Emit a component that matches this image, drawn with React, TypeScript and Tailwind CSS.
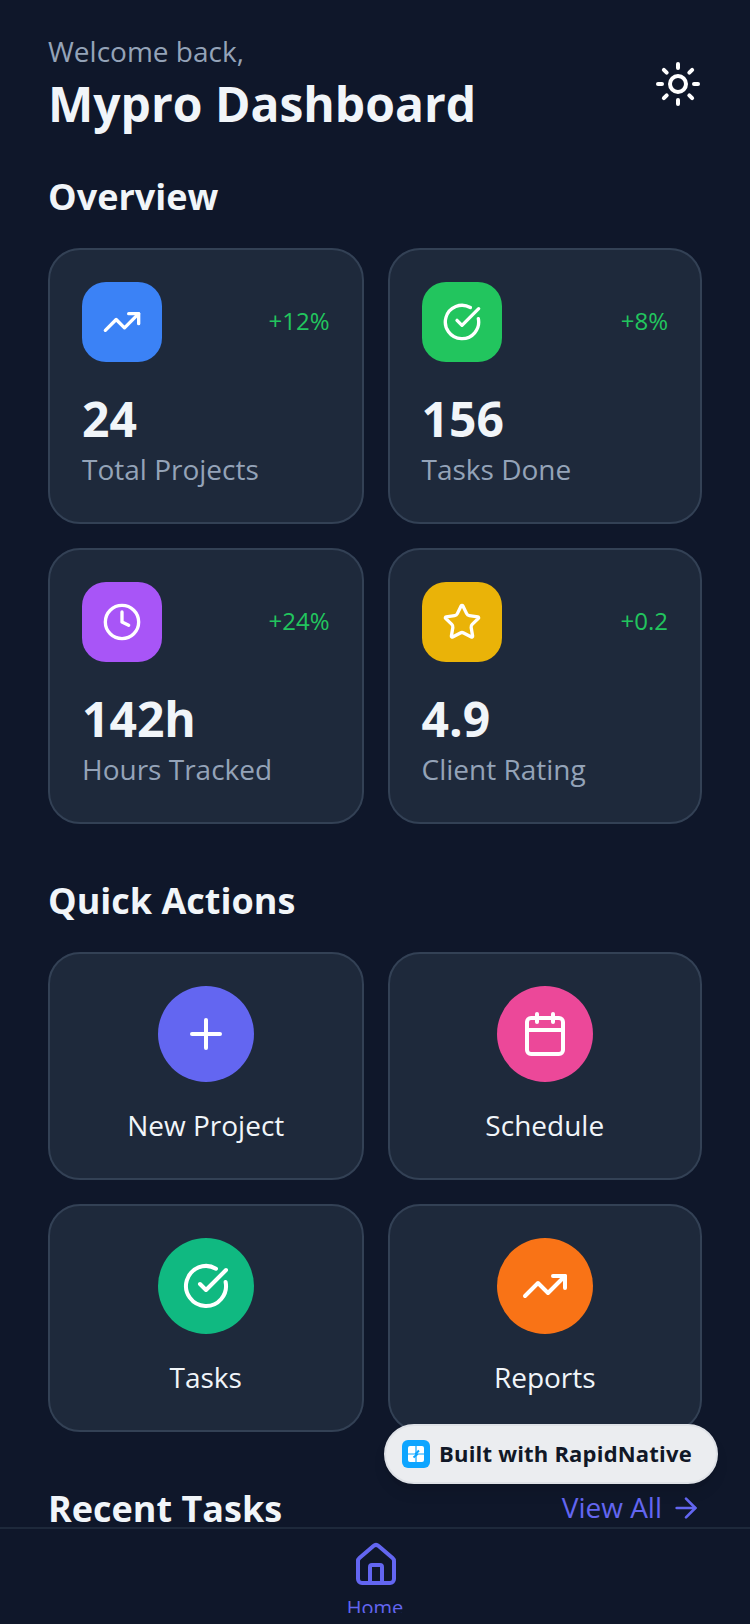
import { ArrowRight, Calendar, CircleCheckBig, Clock, Home, Plus, Star, Sun, TrendingUp } from "lucide-react";
import type { LucideIcon } from "lucide-react";

type Stat = { icon: LucideIcon; tint: string; change: string; value: string; label: string };
type Action = { icon: LucideIcon; tint: string; label: string };

const stats: Stat[] = [
  { icon: TrendingUp, tint: "bg-[#3b82f6]", change: "+12%", value: "24", label: "Total Projects" },
  { icon: CircleCheckBig, tint: "bg-[#22c55e]", change: "+8%", value: "156", label: "Tasks Done" },
  { icon: Clock, tint: "bg-[#a855f7]", change: "+24%", value: "142h", label: "Hours Tracked" },
  { icon: Star, tint: "bg-[#eab308]", change: "+0.2", value: "4.9", label: "Client Rating" },
];

const actions: Action[] = [
  { icon: Plus, tint: "bg-[#6366f1]", label: "New Project" },
  { icon: Calendar, tint: "bg-[#ec4899]", label: "Schedule" },
  { icon: CircleCheckBig, tint: "bg-[#10b981]", label: "Tasks" },
  { icon: TrendingUp, tint: "bg-[#f97316]", label: "Reports" },
];

const StatCard = ({ icon: Icon, tint, change, value, label }: Stat) => (
  <div className="rounded-[32px] border-2 border-[#334155] bg-[#1e293b] p-8">
    <div className="mb-6 flex items-center justify-between">
      <div className={`flex h-20 w-20 items-center justify-center rounded-3xl ${tint}`}>
        <Icon size={40} color="#ffffff" />
      </div>
      <span className="pb-[2px] text-2xl leading-[30px] text-[#22c55e]">{change}</span>
    </div>
    <div className="pt-[2px] text-5xl leading-[62px] font-bold text-[#f1f5f9]">{value}</div>
    <div className="pb-[2px] text-[28px] leading-[38px] text-[#94a3b8]">{label}</div>
  </div>
);

const ActionCard = ({ icon: Icon, tint, label }: Action) => (
  <div className="flex flex-col items-center rounded-[32px] border-2 border-[#334155] bg-[#1e293b] p-8">
    <div className={`mb-6 flex h-24 w-24 items-center justify-center rounded-full ${tint}`}>
      <Icon size={48} color="#ffffff" />
    </div>
    <span className="pb-[2px] text-[28px] leading-[38px] font-medium text-[#f1f5f9]">{label}</span>
  </div>
);

const BuiltWithBadge = () => (
  <div className="absolute top-[1424px] left-[384px] flex h-[60px] w-[334px] items-center gap-[9px] rounded-full border-2 border-[#dfe2e7] bg-[#ebedf0] pl-4 shadow-lg">
    <svg width="28" height="28" viewBox="0 0 28 28">
      <rect width="28" height="28" rx="6" fill="#0ea5ff" />
      <rect x="6" y="6" width="16" height="16" rx="2" fill="#ffffff" />
      <path d="M14 6v16M6 14h16" stroke="#0ea5ff" strokeWidth="1.2" />
      <path d="M17 10.5l-3 3 1 1-3.5 3" fill="none" stroke="#0ea5ff" strokeWidth="2" />
    </svg>
    <span className="pb-[2px] text-[22px] leading-none font-bold tracking-[0.2px] text-[#111827]">Built with RapidNative</span>
  </div>
);

export default function App() {
  return (
    <div className="relative flex h-[1624px] w-[750px] flex-col overflow-hidden bg-[#0f172a] font-['Open_Sans',sans-serif]">
      <main className="min-h-0 flex-1 overflow-hidden px-12 pt-8">
        <header className="mb-8 flex items-center justify-between">
          <div>
            <p className="pb-[2px] text-[28px] leading-[38px] text-[#94a3b8]">Welcome back,</p>
            <h1 className="text-5xl leading-16 font-bold text-[#f1f5f9]">Mypro Dashboard</h1>
          </div>
          <Sun size={48} color="#ffffff" />
        </header>

        <section className="mb-12">
          <h2 className="mb-6 pt-[2px] text-4xl leading-[54px] font-bold text-[#f1f5f9]">Overview</h2>
          <div className="grid grid-cols-[315.5px_314.5px] gap-6">
            {stats.map((s) => (
              <StatCard key={s.label} {...s} />
            ))}
          </div>
        </section>

        <section className="mb-12">
          <h2 className="mb-6 pt-[2px] text-4xl leading-[54px] font-bold text-[#f1f5f9]">Quick Actions</h2>
          <div className="grid grid-cols-[315.5px_314.5px] gap-6">
            {actions.map((a) => (
              <ActionCard key={a.label} {...a} />
            ))}
          </div>
        </section>

        <section className="flex items-center justify-between">
          <h2 className="pt-[2px] text-4xl leading-[54px] font-bold text-[#f1f5f9]">Recent Tasks</h2>
          <div className="flex items-center gap-2 text-[#6366f1]">
            <span className="pb-[2px] text-[28px] leading-[38px]">View All</span>
            <ArrowRight size={32} />
          </div>
        </section>
      </main>

      <nav className="mb-[11px] flex h-[86px] shrink-0 flex-col items-center overflow-hidden border-t-2 border-[#1e293b] bg-[#0f172a] pt-3">
        <Home size={48} color="#6366f1" className="ml-[2px] shrink-0" />
        <span className="mt-[5px] shrink-0 text-xl leading-7 text-[#6366f1]">Home</span>
      </nav>
      <BuiltWithBadge />
    </div>
  );
}
